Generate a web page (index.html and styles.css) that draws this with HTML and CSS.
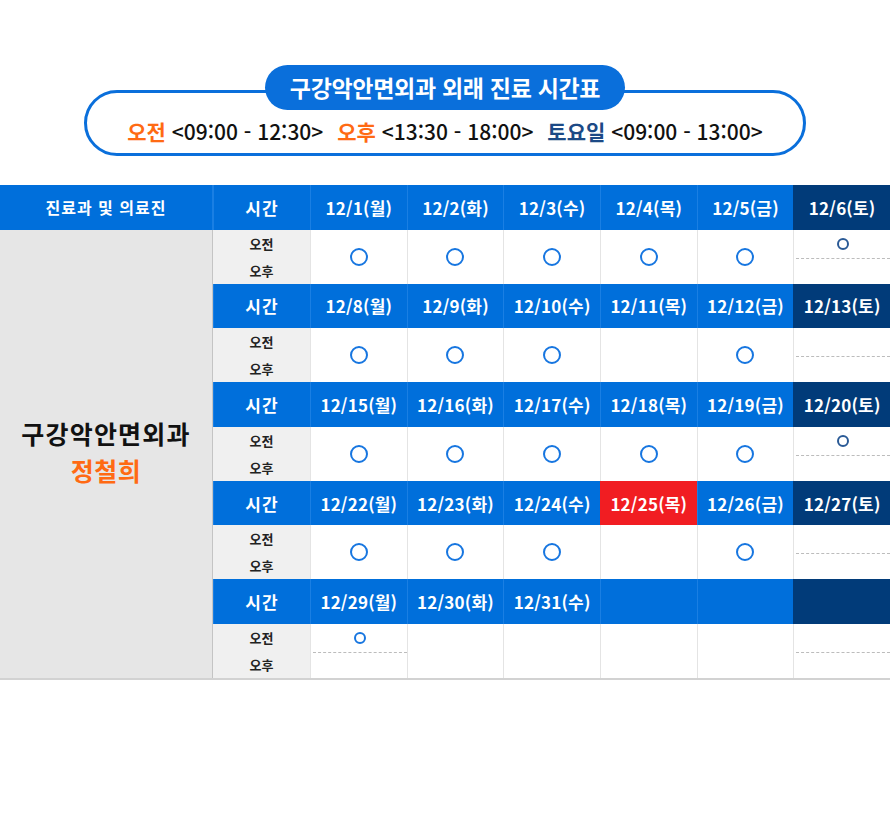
FILE: index.html
```html
<!DOCTYPE html>
<html lang="ko">
<head>
<meta charset="utf-8">
<title>구강악안면외과 외래 진료 시간표</title>
<link rel="stylesheet" href="styles.css">
</head>
<body>
<div class="intro">
  <div class="intro-title">구강악안면외과 외래 진료 시간표</div>
  <p class="intro-hours">
    <span class="grp"><b class="am">오전</b> &lt;09:00 - 12:30&gt;</span>
    <span class="grp"><b class="am">오후</b> &lt;13:30 - 18:00&gt;</span>
    <span class="grp"><b class="sat">토요일</b> &lt;09:00 - 13:00&gt;</span>
  </p>
</div>

<div class="table">
  <div class="hd hd-dept">진료과 및 의료진</div>
  <div class="hd hd-time">시간</div>
  <div class="hd">12/1(월)</div>
  <div class="hd">12/2(화)</div>
  <div class="hd">12/3(수)</div>
  <div class="hd">12/4(목)</div>
  <div class="hd">12/5(금)</div>
  <div class="hd hd-sat">12/6(토)</div>

  <div class="dept"><div class="dept-name">구강악안면외과</div><div class="dept-doc">정철희</div></div>

  <div class="tm"><span>오전</span><span>오후</span></div>
  <div class="cell"><i class="o"></i></div>
  <div class="cell"><i class="o"></i></div>
  <div class="cell"><i class="o"></i></div>
  <div class="cell"><i class="o"></i></div>
  <div class="cell"><i class="o"></i></div>
  <div class="cell split"><div class="top"><i class="os navy"></i></div><div class="bot"></div></div>

  <div class="hd hd-time">시간</div>
  <div class="hd">12/8(월)</div>
  <div class="hd">12/9(화)</div>
  <div class="hd">12/10(수)</div>
  <div class="hd">12/11(목)</div>
  <div class="hd">12/12(금)</div>
  <div class="hd hd-sat">12/13(토)</div>

  <div class="tm"><span>오전</span><span>오후</span></div>
  <div class="cell"><i class="o"></i></div>
  <div class="cell"><i class="o"></i></div>
  <div class="cell"><i class="o"></i></div>
  <div class="cell"></div>
  <div class="cell"><i class="o"></i></div>
  <div class="cell split"><div class="top"></div><div class="bot"></div></div>

  <div class="hd hd-time">시간</div>
  <div class="hd">12/15(월)</div>
  <div class="hd">12/16(화)</div>
  <div class="hd">12/17(수)</div>
  <div class="hd">12/18(목)</div>
  <div class="hd">12/19(금)</div>
  <div class="hd hd-sat">12/20(토)</div>

  <div class="tm"><span>오전</span><span>오후</span></div>
  <div class="cell"><i class="o"></i></div>
  <div class="cell"><i class="o"></i></div>
  <div class="cell"><i class="o"></i></div>
  <div class="cell"><i class="o"></i></div>
  <div class="cell"><i class="o"></i></div>
  <div class="cell split"><div class="top"><i class="os navy"></i></div><div class="bot"></div></div>

  <div class="hd hd-time">시간</div>
  <div class="hd">12/22(월)</div>
  <div class="hd">12/23(화)</div>
  <div class="hd">12/24(수)</div>
  <div class="hd hd-hol">12/25(목)</div>
  <div class="hd">12/26(금)</div>
  <div class="hd hd-sat">12/27(토)</div>

  <div class="tm"><span>오전</span><span>오후</span></div>
  <div class="cell"><i class="o"></i></div>
  <div class="cell"><i class="o"></i></div>
  <div class="cell"><i class="o"></i></div>
  <div class="cell"></div>
  <div class="cell"><i class="o"></i></div>
  <div class="cell split"><div class="top"></div><div class="bot"></div></div>

  <div class="hd hd-time">시간</div>
  <div class="hd">12/29(월)</div>
  <div class="hd">12/30(화)</div>
  <div class="hd">12/31(수)</div>
  <div class="hd"></div>
  <div class="hd"></div>
  <div class="hd hd-sat"></div>

  <div class="tm"><span>오전</span><span>오후</span></div>
  <div class="cell split"><div class="top"><i class="os"></i></div><div class="bot"></div></div>
  <div class="cell"></div>
  <div class="cell"></div>
  <div class="cell"></div>
  <div class="cell"></div>
  <div class="cell split"><div class="top"></div><div class="bot"></div></div>
</div>
</body>
</html>
```

FILE: styles.css
```css
* { box-sizing: border-box; }

body {
  margin: 0;
  background: #fff;
  font-family: "Noto Sans CJK KR", "Noto Sans", sans-serif;
  color: #111;
}

.intro {
  position: relative;
  width: 722px;
  height: 66px;
  margin: 90px auto 0;
  border: 3px solid #0a6fdb;
  border-radius: 34px;
  padding-top: 24px;
}

.intro-title {
  position: absolute;
  top: -28px;
  left: 50%;
  transform: translateX(-50%);
  width: 360px;
  height: 45px;
  border-radius: 23px;
  background: #0a6fdb;
  color: #fff;
  font-size: 23px;
  font-weight: 700;
  letter-spacing: -0.3px;
  line-height: 45px;
  text-align: center;
  white-space: nowrap;
}

.intro-hours {
  margin: 0;
  display: flex;
  justify-content: center;
  gap: 14px;
  font-size: 21px;
  font-weight: 500;
  line-height: 28px;
  color: #111;
  white-space: nowrap;
}

.intro-hours b { font-weight: 700; }
.intro-hours .am { color: #ff6a13; }
.intro-hours .sat { color: #1c4a86; }

.table {
  margin-top: 29px;
  display: grid;
  grid-template-columns: 213px 97px repeat(6, 1fr);
  grid-template-rows: repeat(5, 44.6px 54px);
  border-bottom: 2px solid #d2d2d2;
}

.hd {
  background: #006fdb;
  color: #fff;
  font-size: 17px;
  font-weight: 700;
  letter-spacing: 0.2px;
  display: flex;
  align-items: center;
  justify-content: center;
  border-left: 1px solid #1a7fe3;
  white-space: nowrap;
}

.hd-time { letter-spacing: 1px; }

.hd-dept {
  font-size: 16px;
  letter-spacing: 1px;
  border-left: none;
  border-right: 1px solid #1a7fe3;
}

.hd-sat { background: #013b79; border-left-color: #013b79; }
.hd-hol { background: #f11d22; border-left-color: #f11d22; }

.dept {
  grid-column: 1;
  grid-row: 2 / span 9;
  background: #e6e6e6;
  border-right: 1px solid #c4c4c4;
  display: flex;
  flex-direction: column;
  align-items: center;
  justify-content: center;
  font-size: 25px;
  font-weight: 700;
  line-height: 37px;
  padding-bottom: 4px;
}

.dept-name { color: #111; letter-spacing: 1.2px; }
.dept-doc { color: #ff6a13; letter-spacing: 0.5px; }

.tm {
  background: #f0f0f0;
  display: flex;
  flex-direction: column;
  align-items: center;
  font-size: 13px;
  font-weight: 700;
  color: #222;
}

.tm span {
  flex: 1;
  display: flex;
  align-items: center;
}

.cell {
  background: #fff;
  border-left: 1px solid #e4e4e4;
  display: flex;
  align-items: center;
  justify-content: center;
}

.cell.split {
  flex-direction: column;
  align-items: stretch;
  justify-content: flex-start;
}

.split .top {
  height: 29px;
  border-bottom: 1px dashed #bcbcbc;
  margin-left: 2px;
  display: flex;
  align-items: center;
  justify-content: center;
}

.split .bot { flex: 1; }

.o {
  display: block;
  width: 18px;
  height: 18px;
  border: 2.5px solid #1776e0;
  border-radius: 50%;
}

.os {
  display: block;
  width: 12px;
  height: 12px;
  border: 2px solid #1776e0;
  border-radius: 50%;
}

.os.navy { border-color: #2a5a96; }
```
